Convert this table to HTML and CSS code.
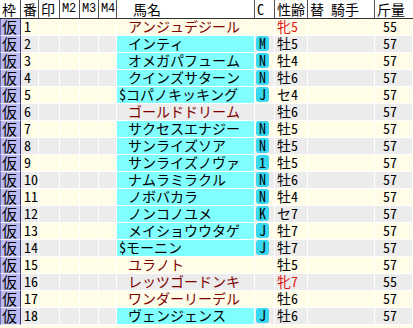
FILE: index.html
```html
<!DOCTYPE html>
<html lang="ja">
<head>
<meta charset="utf-8">
<link rel="stylesheet" href="styles.css">
</head>
<body>
<div class="sheet">
  <div class="row hdr">
    <div class="h h-waku">枠</div><div class="h">番</div><div class="h">印</div><div class="h hm">M2</div><div class="h hm">M3</div><div class="h hm">M4</div><div class="h">　馬名</div><div class="h">C</div><div class="h">性齢</div><div class="h">替 騎手</div><div class="h">斤量</div>
  </div>
  <div class="row y"><div class="waku">仮</div><div class="ban">1</div><div class="c"></div><div class="c"></div><div class="c"></div><div class="c"></div><div class="nm red">アンジュデジール</div><div class="cc"></div><div class="sx f">牝5</div><div class="jk"></div><div class="kg">55</div></div>
  <div class="row g"><div class="waku">仮</div><div class="ban">2</div><div class="c"></div><div class="c"></div><div class="c"></div><div class="c"></div><div class="nm cy">インティ</div><div class="cc"><span class="badge">M</span></div><div class="sx">牡5</div><div class="jk"></div><div class="kg">57</div></div>
  <div class="row y"><div class="waku">仮</div><div class="ban">3</div><div class="c"></div><div class="c"></div><div class="c"></div><div class="c"></div><div class="nm cy">オメガパフューム</div><div class="cc"><span class="badge">N</span></div><div class="sx">牡4</div><div class="jk"></div><div class="kg">57</div></div>
  <div class="row g"><div class="waku">仮</div><div class="ban">4</div><div class="c"></div><div class="c"></div><div class="c"></div><div class="c"></div><div class="nm cy">クインズサターン</div><div class="cc"><span class="badge">N</span></div><div class="sx">牡6</div><div class="jk"></div><div class="kg">57</div></div>
  <div class="row y"><div class="waku">仮</div><div class="ban">5</div><div class="c"></div><div class="c"></div><div class="c"></div><div class="c"></div><div class="nm cy"><span class="dol">$</span>コパノキッキング</div><div class="cc"><span class="badge">J</span></div><div class="sx">セ4</div><div class="jk"></div><div class="kg">57</div></div>
  <div class="row g"><div class="waku">仮</div><div class="ban">6</div><div class="c"></div><div class="c"></div><div class="c"></div><div class="c"></div><div class="nm red">ゴールドドリーム</div><div class="cc"></div><div class="sx">牡6</div><div class="jk"></div><div class="kg">57</div></div>
  <div class="row y"><div class="waku">仮</div><div class="ban">7</div><div class="c"></div><div class="c"></div><div class="c"></div><div class="c"></div><div class="nm cy">サクセスエナジー</div><div class="cc"><span class="badge">N</span></div><div class="sx">牡5</div><div class="jk"></div><div class="kg">57</div></div>
  <div class="row g"><div class="waku">仮</div><div class="ban">8</div><div class="c"></div><div class="c"></div><div class="c"></div><div class="c"></div><div class="nm cy">サンライズソア</div><div class="cc"><span class="badge">N</span></div><div class="sx">牡5</div><div class="jk"></div><div class="kg">57</div></div>
  <div class="row y"><div class="waku">仮</div><div class="ban">9</div><div class="c"></div><div class="c"></div><div class="c"></div><div class="c"></div><div class="nm cy">サンライズノヴァ</div><div class="cc"><span class="badge">1</span></div><div class="sx">牡5</div><div class="jk"></div><div class="kg">57</div></div>
  <div class="row g"><div class="waku">仮</div><div class="ban">10</div><div class="c"></div><div class="c"></div><div class="c"></div><div class="c"></div><div class="nm cy">ナムラミラクル</div><div class="cc"><span class="badge">N</span></div><div class="sx">牡6</div><div class="jk"></div><div class="kg">57</div></div>
  <div class="row y"><div class="waku">仮</div><div class="ban">11</div><div class="c"></div><div class="c"></div><div class="c"></div><div class="c"></div><div class="nm cy">ノボバカラ</div><div class="cc"><span class="badge">N</span></div><div class="sx">牡4</div><div class="jk"></div><div class="kg">57</div></div>
  <div class="row g"><div class="waku">仮</div><div class="ban">12</div><div class="c"></div><div class="c"></div><div class="c"></div><div class="c"></div><div class="nm cy">ノンコノユメ</div><div class="cc"><span class="badge">K</span></div><div class="sx">セ7</div><div class="jk"></div><div class="kg">57</div></div>
  <div class="row y"><div class="waku">仮</div><div class="ban">13</div><div class="c"></div><div class="c"></div><div class="c"></div><div class="c"></div><div class="nm cy">メイショウウタゲ</div><div class="cc"><span class="badge">J</span></div><div class="sx">牡7</div><div class="jk"></div><div class="kg">57</div></div>
  <div class="row g"><div class="waku">仮</div><div class="ban">14</div><div class="c"></div><div class="c"></div><div class="c"></div><div class="c"></div><div class="nm cy"><span class="dol">$</span>モーニン</div><div class="cc"><span class="badge">J</span></div><div class="sx">牡7</div><div class="jk"></div><div class="kg">57</div></div>
  <div class="row y"><div class="waku">仮</div><div class="ban">15</div><div class="c"></div><div class="c"></div><div class="c"></div><div class="c"></div><div class="nm red">ユラノト</div><div class="cc"></div><div class="sx">牡5</div><div class="jk"></div><div class="kg">57</div></div>
  <div class="row g"><div class="waku">仮</div><div class="ban">16</div><div class="c"></div><div class="c"></div><div class="c"></div><div class="c"></div><div class="nm red">レッツゴードンキ</div><div class="cc"></div><div class="sx f">牝7</div><div class="jk"></div><div class="kg">55</div></div>
  <div class="row y"><div class="waku">仮</div><div class="ban">17</div><div class="c"></div><div class="c"></div><div class="c"></div><div class="c"></div><div class="nm red">ワンダーリーデル</div><div class="cc"></div><div class="sx">牡6</div><div class="jk"></div><div class="kg">57</div></div>
  <div class="row g"><div class="waku">仮</div><div class="ban">18</div><div class="c"></div><div class="c"></div><div class="c"></div><div class="c"></div><div class="nm cy">ヴェンジェンス</div><div class="cc"><span class="badge">J</span></div><div class="sx">牡6</div><div class="jk"></div><div class="kg">57</div></div>
</div>
</body>
</html>
```

FILE: styles.css
```css
html, body {
  margin: 0;
  padding: 0;
}
body {
  width: 413px;
  height: 328px;
  overflow: hidden;
  background: #fffde8;
  font-family: "Noto Sans Mono CJK JP", "Noto Sans CJK JP", "Noto Sans", sans-serif;
  font-size: 14px;
  color: #000;
}
.sheet {
  display: flex;
  flex-direction: column;
}
.row {
  display: grid;
  grid-template-columns: 21px 18px 21px 20px 19px 18px 138px 20px 33px 67px 38px;
  height: 17px;
}
.row > div {
  box-sizing: border-box;
  height: 17px;
  line-height: 15px;
  white-space: nowrap;
  border-right: 1px solid #ffffff;
  border-bottom: 1px solid #ffffff;
}
.hdr {
  height: 19px;
  background: #ffffff;
}
.hdr > div.h {
  height: 19px;
  padding-top: 1px;
  line-height: 17px;
  padding-left: 2px;
  border-right: 1px solid #505050;
  border-bottom: 1px solid #303030;
  background: #ffffff;
}
.hdr > div.hm {
  font-family: "Liberation Mono", monospace;
  font-size: 12px;
  padding-left: 2px;
  letter-spacing: -0.3px;
}
.hdr > div.h:last-child {
  border-right: none;
}
.y > div { background: #fffde8; }
.g > div { background: #ececec; }
.row > div.waku {
  background: #bcbcf2;
  border-left: 1px solid #6a6ab0;
  border-right: 1px solid #30306a;
  font-size: 15px;
  padding-left: 1px;
  border-bottom: 1px solid #e8e8ff;
}
.ban {
  padding-left: 3px;
}
.row > div.nm {
  padding-left: 11px;
}
.row > div.nm.cy {
  background: #80ffff;
}
.nm.red {
  color: #800000;
}
.dol {
  margin-left: -9px;
}
.cc {
  padding-left: 1px;
}
.badge {
  display: inline-block;
  width: 13px;
  height: 15px;
  border-radius: 3px;
  background: #38d8f0;
  text-align: center;
  font-size: 14px;
  line-height: 15px;
  vertical-align: top;
}
.sx {
  padding-left: 2px;
}
.sx.f {
  color: #e01818;
}
.kg {
  padding-left: 8px;
}
```
